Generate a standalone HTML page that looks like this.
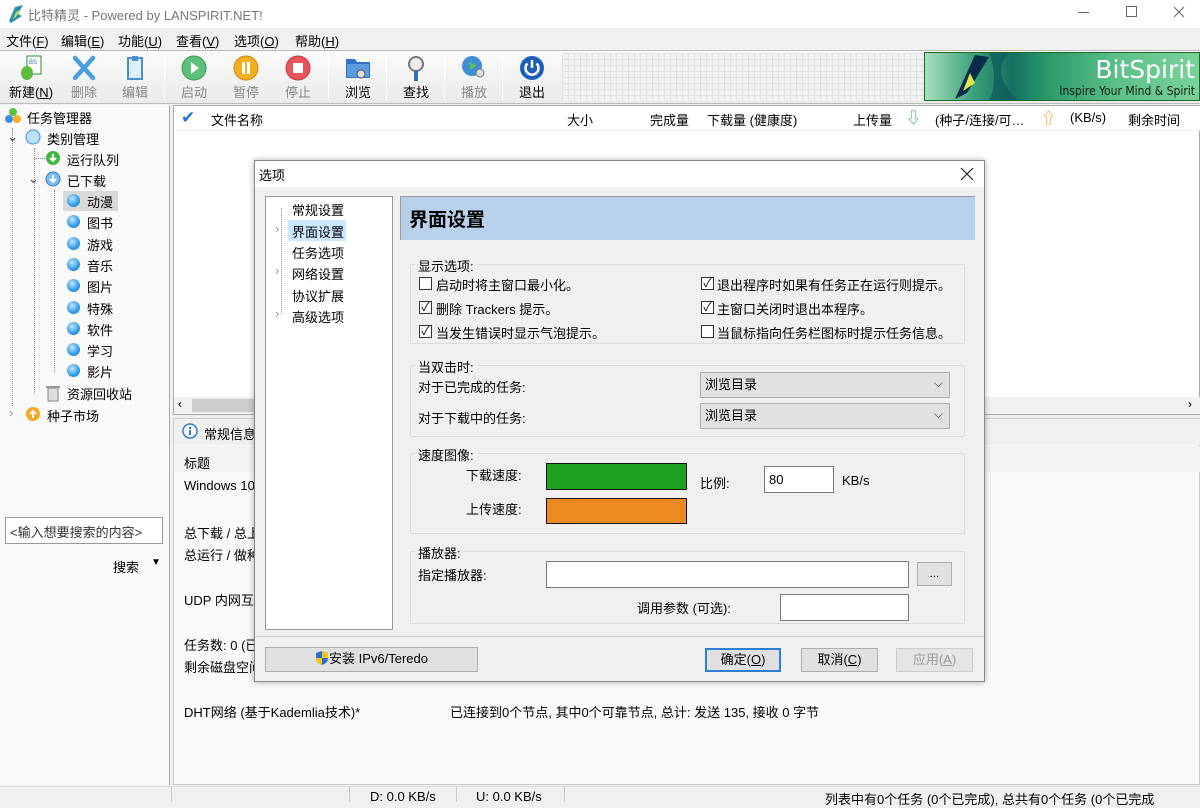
<!DOCTYPE html>
<html><head><meta charset="utf-8">
<style>
*{margin:0;padding:0;box-sizing:border-box}
body{width:1200px;height:802px;overflow:hidden;background:#f0f0f0;font:13px "Liberation Sans","Noto Sans CJK SC",sans-serif;color:#000;position:relative}
.a{position:absolute}
.t{position:absolute;white-space:nowrap}
.tb{position:absolute;top:53px;width:56px;height:48px;text-align:center;font-size:13px}
.tb svg{position:absolute;left:15px;top:2px}
.tb .l{position:absolute;top:29px;left:0;right:0}
.g{color:#888}
.sep{position:absolute;top:54px;width:1px;height:46px;background:#ccc;border-right:1px solid #fff}
.dot{position:absolute;width:13px;height:13px;border-radius:50%;background:radial-gradient(circle at 40% 35%,#bfe6ff,#2d9be8 60%,#1a6fc0)}
.cb{position:absolute;width:13px;height:13px;border:1px solid #333;background:#fff;font-size:12px;line-height:11px;text-align:center}
.grp{position:absolute;border:1px solid #dcdcdc;border-radius:2px}
.gl{position:absolute;background:#f0f0f0;padding:0 3px;top:-9px;left:4px}
.btn{position:absolute;height:24px;border:1px solid #adadad;background:#e1e1e1;text-align:center;line-height:22px}
.sel{position:absolute;height:26px;border:1px solid #adadad;background:#e1e1e1;padding-left:4px;line-height:24px}
.sel:after{content:"⌵";position:absolute;right:6px;top:-2px;font-size:12px;color:#333}
</style></head><body>
<div class="a" style="left:0;top:0;width:1200px;height:28px;background:#fff"></div>
<svg class="a" style="left:6px;top:4px" width="20" height="20"><path d="M3 17 L9 3 L17 1 L12 10 L16 12 L5 19Z" fill="#2c8fb0"/><path d="M7 15 L10 8 L14 6 L10 13Z" fill="#b7e04a"/></svg>
<div class="t" style="left:28px;top:5px;color:#777;font-size:13px">比特精灵 - Powered by LANSPIRIT.NET!</div>
<svg class="a" style="left:1070px;top:4px" width="120" height="16"><path d="M8 8.5h11" stroke="#666"/><rect x="56.5" y="2.5" width="10" height="10" fill="none" stroke="#666"/><path d="M104 3l10 10M114 3l-10 10" stroke="#666"/></svg>
<div class="a" style="left:0;top:28px;width:1200px;height:22px;background:#f0f0f0"></div>
<div class="t" style="left:6px;top:31px">文件(<u>F</u>)</div>
<div class="t" style="left:61px;top:31px">编辑(<u>E</u>)</div>
<div class="t" style="left:118px;top:31px">功能(<u>U</u>)</div>
<div class="t" style="left:176px;top:31px">查看(<u>V</u>)</div>
<div class="t" style="left:234px;top:31px">选项(<u>O</u>)</div>
<div class="t" style="left:295px;top:31px">帮助(<u>H</u>)</div>
<div class="a" style="left:0;top:50px;width:1200px;height:54px;background:linear-gradient(#fafafa,#ebebeb);border-top:1px solid #bbb;border-bottom:1px solid #bbb"></div>
<div class="a" style="left:562px;top:53px;width:362px;height:48px;background-color:#f2f2f2;background-image:linear-gradient(#e2e2e2 1px,transparent 1px),linear-gradient(90deg,#e2e2e2 1px,transparent 1px);background-size:6px 6px"></div>
<div class="tb" style="left:3px"><svg width="26" height="26"><rect x="9" y="1" width="14" height="18" fill="#fff" stroke="#3a8a3a"/><text x="11" y="9" font-size="6" fill="#2a6fb0" font-family="Liberation Sans">BS</text><ellipse cx="9" cy="18" rx="6" ry="7" fill="#5dba3c"/></svg><span class="l">新建(<u>N</u>)</span></div>
<div class="tb g" style="left:56px"><svg width="26" height="26"><path d="M4 3 L22 23 M22 3 L4 23" stroke="#4a9ee0" stroke-width="4.5" stroke-linecap="round"/></svg><span class="l">删除</span></div>
<div class="tb g" style="left:107px"><svg width="26" height="26"><rect x="6" y="3" width="14" height="21" fill="#dfeefb" stroke="#4a8fd0" stroke-width="2"/><rect x="10" y="1" width="6" height="5" fill="#4a8fd0"/></svg><span class="l">编辑</span></div>
<div class="sep" style="left:164px"></div>
<div class="tb g" style="left:166px"><svg width="26" height="26"><circle cx="13" cy="13" r="12" fill="#5cc27a" stroke="#3a9a55"/><path d="M10 7 L18 13 L10 19Z" fill="#fff"/></svg><span class="l">启动</span></div>
<div class="tb g" style="left:218px"><svg width="26" height="26"><circle cx="13" cy="13" r="12" fill="#efb21e" stroke="#c98a10"/><rect x="9" y="7" width="3" height="12" fill="#fff"/><rect x="14" y="7" width="3" height="12" fill="#fff"/></svg><span class="l">暂停</span></div>
<div class="tb g" style="left:270px"><svg width="26" height="26"><circle cx="13" cy="13" r="12" fill="#e8555c" stroke="#c03a40"/><rect x="8" y="8" width="10" height="10" fill="#fff"/></svg><span class="l">停止</span></div>
<div class="sep" style="left:328px"></div>
<div class="tb" style="left:330px"><svg width="26" height="26"><path d="M1 4 h9 l2 3 h13 v16 h-24z" fill="#2f73c8"/><rect x="2" y="9" width="22" height="13" fill="#5c9be0"/><circle cx="16" cy="19" r="4" fill="#ddd" stroke="#555"/></svg><span class="l">浏览</span></div>
<div class="sep" style="left:386px"></div>
<div class="tb" style="left:388px"><svg width="26" height="26"><circle cx="13" cy="9" r="7" fill="#eee" stroke="#777" stroke-width="2"/><rect x="11" y="16" width="4" height="10" fill="#2f6fc0"/></svg><span class="l">查找</span></div>
<div class="sep" style="left:444px"></div>
<div class="tb g" style="left:446px"><svg width="26" height="26"><circle cx="11" cy="11" r="10" fill="#3e8fd8"/><path d="M5 6 q5 2 4 8 q4 0 6-4" fill="#6cc04a"/><circle cx="19" cy="18" r="4" fill="#ddd" stroke="#777"/></svg><span class="l">播放</span></div>
<div class="sep" style="left:502px"></div>
<div class="tb" style="left:504px"><svg width="26" height="26"><circle cx="13" cy="13" r="12" fill="#1d5fb8"/><path d="M8.5 8.5 a6.5 6.5 0 1 0 9 0" fill="none" stroke="#fff" stroke-width="2.5"/><path d="M13 5 v8" stroke="#fff" stroke-width="2.5"/></svg><span class="l">退出</span></div>
<div class="a" style="left:924px;top:52px;width:276px;height:49px;border:1px solid #1a6a20;background:linear-gradient(90deg,#a8dfc0 0%,#3aa07a 18%,#137060 32%,#2c9a6a 45%,#5cc08a 70%,#7ad29a 100%);overflow:hidden">
<svg class="a" style="left:0;top:0" width="120" height="49"><path d="M50 2 L30 46 L42 40 L64 4Z" fill="#0a2a4a"/><path d="M45 20 L38 38 L50 30Z" fill="#dfe84a"/><path d="M84 0 q-20 20 10 49 h-30 q10-25 0-49z" fill="#0c5a5a" opacity=".7"/></svg>
<div class="t" style="right:4px;top:2px;color:#fff;font-size:25px;font-family:'DejaVu Sans',sans-serif">BitSpirit</div>
<div class="t" style="right:4px;top:31px;color:#102010;font-size:12px;font-family:'DejaVu Sans Condensed','DejaVu Sans',sans-serif">Inspire Your Mind &amp; Spirit</div>
</div>
<div class="a" style="left:0;top:105px;width:170px;height:680px;background:#f9f9f9;border-right:1px solid #aaa"></div>
<svg class="a" style="left:4px;top:107px" width="18" height="18"><circle cx="9" cy="5" r="4" fill="#5bbf4a"/><circle cx="5" cy="12" r="4" fill="#3a8fe0"/><circle cx="13" cy="12" r="4" fill="#f2b020"/></svg>
<div class="t" style="left:27px;top:108px">任务管理器</div>
<div class="a" style="left:12px;top:128px;height:278px;border-left:1px dotted #888"></div>
<div class="a" style="left:34px;top:148px;height:246px;border-left:1px dotted #888"></div>
<div class="a" style="left:54px;top:190px;height:182px;border-left:1px dotted #888"></div>
<div class="t" style="left:7px;top:129px;color:#444">⌄</div>
<svg class="a" style="left:25px;top:129px" width="16" height="16"><circle cx="8" cy="8" r="7" fill="#bfe0fa" stroke="#3a8fe0"/></svg>
<div class="t" style="left:47px;top:129px">类别管理</div>
<div class="a" style="left:35px;top:158px;width:10px;border-top:1px dotted #888"></div>
<svg class="a" style="left:45px;top:150px" width="16" height="16"><circle cx="8" cy="8" r="7" fill="#3cb83c"/><path d="M8 4 v6 M5 8 l3 3 3-3" stroke="#fff" stroke-width="2" fill="none"/></svg>
<div class="t" style="left:67px;top:150px">运行队列</div>
<div class="t" style="left:28px;top:171px;color:#444">⌄</div>
<svg class="a" style="left:45px;top:171px" width="16" height="16"><circle cx="8" cy="8" r="7" fill="#7bbcf0" stroke="#2a7fd0"/><path d="M8 4 v6 M5 8 l3 3 3-3" stroke="#fff" stroke-width="2" fill="none"/></svg>
<div class="t" style="left:67px;top:171px">已下载</div>
<div class="a" style="left:63px;top:191px;width:55px;height:20px;background:#d9d9d9"></div>
<div class="dot" style="left:67px;top:194px"></div><div class="t" style="left:87px;top:192px">动漫</div>
<div class="dot" style="left:67px;top:215px"></div><div class="t" style="left:87px;top:213px">图书</div>
<div class="dot" style="left:67px;top:237px"></div><div class="t" style="left:87px;top:235px">游戏</div>
<div class="dot" style="left:67px;top:258px"></div><div class="t" style="left:87px;top:256px">音乐</div>
<div class="dot" style="left:67px;top:279px"></div><div class="t" style="left:87px;top:277px">图片</div>
<div class="dot" style="left:67px;top:301px"></div><div class="t" style="left:87px;top:299px">特殊</div>
<div class="dot" style="left:67px;top:322px"></div><div class="t" style="left:87px;top:320px">软件</div>
<div class="dot" style="left:67px;top:343px"></div><div class="t" style="left:87px;top:341px">学习</div>
<div class="dot" style="left:67px;top:364px"></div><div class="t" style="left:87px;top:362px">影片</div>
<svg class="a" style="left:45px;top:384px" width="16" height="18"><rect x="3" y="4" width="10" height="13" fill="#ddd" stroke="#888"/><rect x="1" y="2" width="14" height="2" fill="#999"/></svg>
<div class="t" style="left:67px;top:384px">资源回收站</div>
<div class="t" style="left:9px;top:405px;color:#999">›</div>
<svg class="a" style="left:25px;top:406px" width="16" height="16"><circle cx="8" cy="8" r="7" fill="#f7a81e"/><path d="M8 12 v-6 M5 8 l3-3 3 3" stroke="#fff" stroke-width="2" fill="none"/></svg>
<div class="t" style="left:47px;top:406px">种子市场</div>
<div class="a" style="left:5px;top:517px;width:158px;height:27px;border:1px solid #999;background:#fff"></div>
<div class="t" style="left:10px;top:522px;color:#333">&lt;输入想要搜索的内容&gt;</div>
<div class="t" style="left:113px;top:557px">搜索</div>
<div class="t" style="left:151px;top:557px;font-size:10px">▼</div>
<div class="a" style="left:173px;top:105px;width:1027px;height:310px;background:#fff;border:1px solid #aaa"></div>
<div class="a" style="left:174px;top:106px;width:1026px;height:25px;background:#fff;border-bottom:1px solid #f0f0f0"></div>
<div class="t" style="left:181px;top:108px;color:#2a70d0;font-size:17px">✔</div>
<div class="t" style="left:211px;top:110px">文件名称</div>
<div class="t" style="left:567px;top:110px">大小</div>
<div class="t" style="left:650px;top:110px">完成量</div>
<div class="t" style="left:707px;top:110px">下载量 (健康度)</div>
<div class="t" style="left:853px;top:110px">上传量</div>
<div class="t" style="left:906px;top:107px;color:#3cb03c;font-size:15px">⇩</div>
<div class="t" style="left:935px;top:110px">(种子/连接/可…</div>
<div class="t" style="left:1041px;top:107px;color:#f59a10;font-size:15px">⇧</div>
<div class="t" style="left:1070px;top:110px">(KB/s)</div>
<div class="t" style="left:1128px;top:110px">剩余时间</div>
<div class="a" style="left:174px;top:397px;width:1026px;height:17px;background:#f0f0f0"></div>
<div class="a" style="left:192px;top:399px;width:75px;height:13px;background:#cdcdcd"></div>
<div class="t" style="left:178px;top:397px;font-size:12px">‹</div>
<div class="t" style="left:1188px;top:397px;font-size:12px">›</div>
<div class="a" style="left:173px;top:418px;width:1027px;height:367px;background:#f9f9f9;border:1px solid #ccc"></div>
<div class="a" style="left:174px;top:419px;width:1026px;height:26px;background:#f0f0f0"></div>
<svg class="a" style="left:182px;top:423px" width="16" height="16"><circle cx="8" cy="8" r="7" fill="#fff" stroke="#2a7fd0" stroke-width="1.5"/><rect x="7" y="7" width="2" height="5" fill="#2a7fd0"/><rect x="7" y="4" width="2" height="2" fill="#2a7fd0"/></svg>
<div class="t" style="left:204px;top:424px">常规信息</div>
<div class="a" style="left:174px;top:446px;width:1026px;height:26px;background:#f3f3f3"></div>
<div class="t" style="left:184px;top:453px">标题</div>
<div class="t" style="left:184px;top:478px">Windows 10</div>
<div class="t" style="left:184px;top:523px">总下载 / 总上</div>
<div class="t" style="left:184px;top:545px">总运行 / 做种</div>
<div class="t" style="left:184px;top:590px">UDP 内网互联</div>
<div class="t" style="left:184px;top:635px">任务数: 0 (已</div>
<div class="t" style="left:184px;top:657px">剩余磁盘空间</div>
<div class="t" style="left:184px;top:702px">DHT网络 (基于Kademlia技术)*</div>
<div class="t" style="left:450px;top:702px">已连接到0个节点, 其中0个可靠节点, 总计: 发送 135, 接收 0 字节</div>
<div class="a" style="left:0;top:786px;width:1200px;height:16px;background:#f0f0f0;border-top:1px solid #ddd"></div>
<div class="a" style="left:171px;top:787px;height:15px;border-left:1px solid #ccc"></div>
<div class="a" style="left:349px;top:787px;height:15px;border-left:1px solid #ccc"></div>
<div class="a" style="left:456px;top:787px;height:15px;border-left:1px solid #ccc"></div>
<div class="a" style="left:564px;top:787px;height:15px;border-left:1px solid #ccc"></div>
<div class="t" style="left:370px;top:789px">D: 0.0 KB/s</div>
<div class="t" style="left:476px;top:789px">U: 0.0 KB/s</div>
<div class="t" style="left:825px;top:789px">列表中有0个任务 (0个已完成), 总共有0个任务 (0个已完成</div>
<div class="a" style="left:254px;top:160px;width:731px;height:522px;background:#f0f0f0;border:1px solid #888;box-shadow:0 0 6px rgba(0,0,0,.3)"></div>
<div class="a" style="left:255px;top:161px;width:729px;height:26px;background:#fff"></div>
<div class="t" style="left:259px;top:165px">选项</div>
<svg class="a" style="left:960px;top:167px" width="14" height="14"><path d="M1 1l12 12M13 1L1 13" stroke="#222" stroke-width="1.2"/></svg>
<div class="a" style="left:265px;top:196px;width:128px;height:434px;background:#fff;border:1px solid #999"></div>
<div class="a" style="left:281px;top:208px;height:106px;border-left:1px dotted #999"></div>
<div class="t" style="left:292px;top:200px">常规设置</div>
<div class="a" style="left:288px;top:220px;width:58px;height:21px;background:#cce8ff"></div>
<div class="t" style="left:275px;top:221px;color:#999">›</div><div class="t" style="left:292px;top:222px">界面设置</div>
<div class="t" style="left:292px;top:243px">任务选项</div>
<div class="t" style="left:275px;top:263px;color:#999">›</div><div class="t" style="left:292px;top:264px">网络设置</div>
<div class="t" style="left:292px;top:286px">协议扩展</div>
<div class="t" style="left:275px;top:306px;color:#999">›</div><div class="t" style="left:292px;top:307px">高级选项</div>
<div class="a" style="left:400px;top:196px;width:575px;height:44px;background:#b9d1ea;border:1px solid #999;border-right:none;border-bottom:none"></div>
<div class="t" style="left:409px;top:205px;font-size:19px;font-weight:bold">界面设置</div>
<div class="grp" style="left:410px;top:264px;width:555px;height:80px"><span class="gl">显示选项:</span></div>
<div class="cb" style="left:419px;top:277px"></div><div class="t" style="left:436px;top:275px">启动时将主窗口最小化。</div>
<div class="cb" style="left:419px;top:301px">✓</div><div class="t" style="left:436px;top:299px">删除 Trackers 提示。</div>
<div class="cb" style="left:419px;top:325px">✓</div><div class="t" style="left:436px;top:323px">当发生错误时显示气泡提示。</div>
<div class="cb" style="left:701px;top:277px">✓</div><div class="t" style="left:717px;top:275px">退出程序时如果有任务正在运行则提示。</div>
<div class="cb" style="left:701px;top:301px">✓</div><div class="t" style="left:717px;top:299px">主窗口关闭时退出本程序。</div>
<div class="cb" style="left:701px;top:325px"></div><div class="t" style="left:717px;top:323px">当鼠标指向任务栏图标时提示任务信息。</div>
<div class="grp" style="left:410px;top:365px;width:555px;height:72px"><span class="gl">当双击时:</span></div>
<div class="t" style="left:418px;top:377px">对于已完成的任务:</div>
<div class="sel" style="left:700px;top:372px;width:250px">浏览目录</div>
<div class="t" style="left:418px;top:408px">对于下载中的任务:</div>
<div class="sel" style="left:700px;top:403px;width:250px">浏览目录</div>
<div class="grp" style="left:410px;top:453px;width:555px;height:81px"><span class="gl">速度图像:</span></div>
<div class="t" style="left:466px;top:465px">下载速度:</div>
<div class="a" style="left:546px;top:463px;width:141px;height:27px;background:#1fa01f;border:1px solid #111"></div>
<div class="t" style="left:700px;top:473px">比例:</div>
<div class="a" style="left:764px;top:466px;width:70px;height:27px;background:#fff;border:1px solid #7a7a7a"></div>
<div class="t" style="left:769px;top:472px">80</div>
<div class="t" style="left:842px;top:473px">KB/s</div>
<div class="t" style="left:466px;top:499px">上传速度:</div>
<div class="a" style="left:546px;top:498px;width:141px;height:26px;background:#ea8a20;border:1px solid #111"></div>
<div class="grp" style="left:410px;top:551px;width:555px;height:73px"><span class="gl">播放器:</span></div>
<div class="t" style="left:418px;top:565px">指定播放器:</div>
<div class="a" style="left:546px;top:561px;width:363px;height:27px;background:#fff;border:1px solid #7a7a7a"></div>
<div class="btn" style="left:917px;top:562px;width:35px;height:24px;font-size:11px">...</div>
<div class="t" style="left:637px;top:598px">调用参数 (可选):</div>
<div class="a" style="left:780px;top:594px;width:129px;height:27px;background:#fff;border:1px solid #7a7a7a"></div>
<div class="a" style="left:255px;top:636px;width:729px;border-top:1px solid #ccc"></div>
<div class="btn" style="left:265px;top:647px;width:213px;height:25px"><svg width="14" height="16" style="vertical-align:-3px"><path d="M7 1 L13 3 V8 Q13 13 7 15 Q1 13 1 8 V3Z" fill="#2a6fd0"/><path d="M7 1 L13 3 V8 H7Z M7 8 H1 Q1 13 7 15Z" fill="#f5c518"/></svg>安装 IPv6/Teredo</div>
<div class="btn" style="left:705px;top:648px;width:76px;border:2px solid #2a7fd8;line-height:20px">确定(<u>O</u>)</div>
<div class="btn" style="left:801px;top:648px;width:77px">取消(<u>C</u>)</div>
<div class="btn" style="left:896px;top:648px;width:77px;color:#999;border-color:#ccc;background:#e5e5e5">应用(<u>A</u>)</div>
</body></html>
